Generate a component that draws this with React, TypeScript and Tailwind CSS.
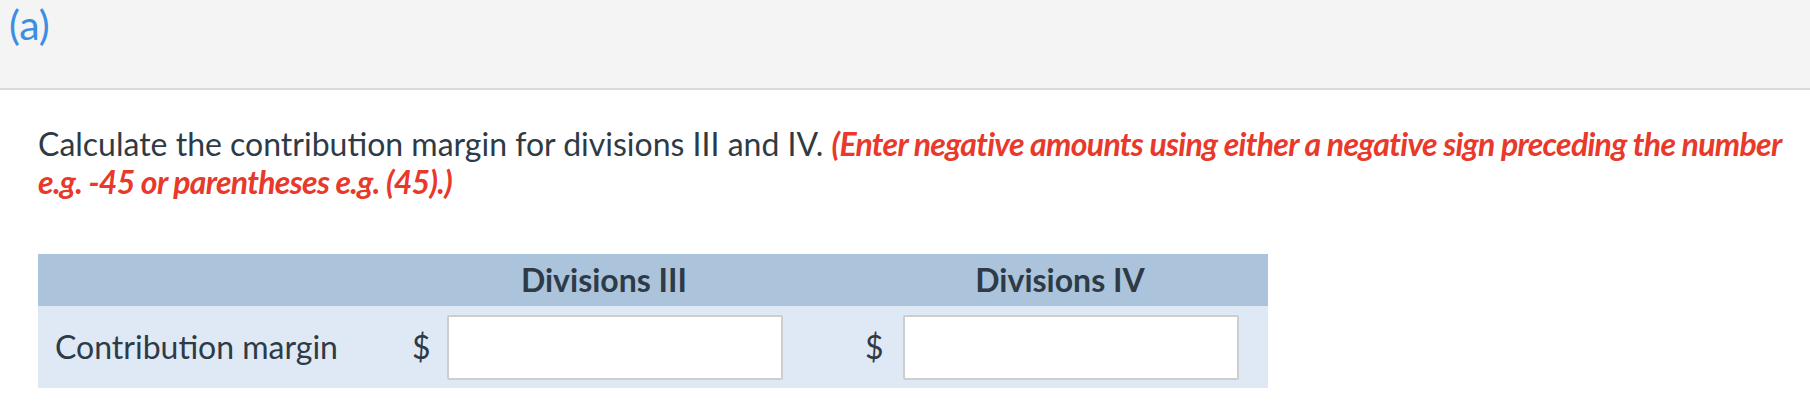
const FONT = { fontFamily: 'Lato, "Open Sans", sans-serif' }

function AmountCell({ pad, dollarWidth }: { pad: string; dollarWidth: string }) {
  return (
    <div className={`flex items-center ${pad}`}>
      <span className={`${dollarWidth} text-[32px] leading-[38px] text-[#2e3b46]`}>$</span>
      <input
        type="text"
        className="h-[65px] w-[336px] rounded-[2px] border-2 border-[#cdcdcd] bg-white px-3 text-[32px] outline-none"
      />
    </div>
  )
}

export default function App() {
  return (
    <div className="min-h-[406px] bg-white" style={FONT}>
      {/* Part header */}
      <div className="h-[90px] border-b-2 border-[#d9d9d9] bg-[#f4f4f4] px-[9px] pt-[1px]">
        <span className="text-[41px] leading-[48px] text-[#3b8ee2]">(a)</span>
      </div>

      <div className="pl-[38px] pt-[35px]">
        <p className="text-[32px] leading-[38px] text-[#2e3b46]">
          Calculate the contribution margin for divisions III and IV.{' '}
          <span className="font-bold italic tracking-[-0.7px] text-[#e8392b]">
            (Enter negative amounts using either a negative sign preceding the number e.g. -45 or
            parentheses e.g. (45).)
          </span>
        </p>

        <div className="mt-[53px] w-[1230px]">
          <div className="grid h-[52px] grid-cols-[318px_496px_416px] items-center bg-[#abc4dc] text-[32px] leading-[38px] font-bold text-[#2e3b46]">
            <div />
            <div className="text-center">Divisions III</div>
            <div className="text-center">Divisions IV</div>
          </div>
          <div className="grid h-[82px] grid-cols-[318px_496px_416px] items-center bg-[#dfe9f5]">
            <div className="pl-[17px] text-[32px] leading-[38px] text-[#2e3b46]">Contribution margin</div>
            <AmountCell pad="pl-[56px]" dollarWidth="w-[35px]" />
            <AmountCell pad="pl-[13px]" dollarWidth="w-[38px]" />
          </div>
        </div>
      </div>
    </div>
  )
}
